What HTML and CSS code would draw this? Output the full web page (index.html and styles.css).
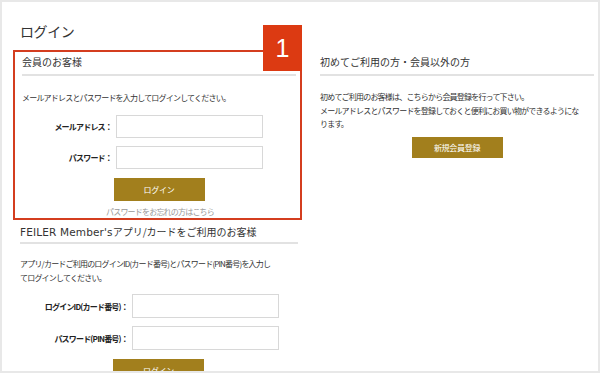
FILE: index.html
```html
<!DOCTYPE html>
<html lang="ja">
<head>
<meta charset="utf-8">
<title>ログイン</title>
<link rel="stylesheet" href="styles.css">
</head>
<body>
<div class="frame">
  <h1 class="title">ログイン</h1>
  <div class="columns">
    <div class="col-left">
      <section class="member-box">
        <span class="badge">1</span>
        <h2 class="sec-head">会員のお客様</h2>
        <p class="desc">メールアドレスとパスワードを入力してログインしてください。</p>
        <div class="form-row">
          <span class="label">メールアドレス：</span>
          <span class="input"></span>
        </div>
        <div class="form-row">
          <span class="label">パスワード：</span>
          <span class="input"></span>
        </div>
        <div class="btn-row"><span class="btn">ログイン</span></div>
        <div class="forgot">パスワードをお忘れの方はこちら</div>
      </section>
      <section class="app-box">
        <h2 class="sec-head app-head"><span class="latin">FEILER Member's</span>アプリ/カードをご利用のお客様</h2>
        <p class="desc app-desc">アプリ/カードご利用のログインID(カード番号)とパスワード(PIN番号)を入力し<br>てログインしてください。</p>
        <div class="form-row app-row">
          <span class="label">ログインID(カード番号)：</span>
          <span class="input"></span>
        </div>
        <div class="form-row app-row">
          <span class="label">パスワード(PIN番号)：</span>
          <span class="input"></span>
        </div>
        <div class="btn-row app-btn"><span class="btn">ログイン</span></div>
      </section>
    </div>
    <div class="col-right">
      <h2 class="sec-head">初めてご利用の方・会員以外の方</h2>
      <p class="desc right-desc">初めてご利用のお客様は、こちらから会員登録を行って下さい。<br>メールアドレスとパスワードを登録しておくと便利にお買い物ができるようになります。</p>
      <div class="btn-row right-btn"><span class="btn">新規会員登録</span></div>
    </div>
  </div>
</div>
</body>
</html>
```
FILE: styles.css
```css
* { box-sizing: border-box; }
html, body { margin: 0; padding: 0; background: #ffffff; }
body {
  font-family: "Noto Sans CJK JP", "Noto Sans", sans-serif;
  color: #333333;
}
.frame {
  width: 600px;
  height: 373px;
  border: 2px solid #e8e8e8;
  background: #ffffff;
  overflow: hidden;
}
.title {
  margin: 19px 0 0 18px;
  font-size: 14px;
  line-height: 20px;
  font-weight: normal;
  letter-spacing: -0.4px;
  color: #333;
}
.columns {
  display: flex;
  margin-top: 9px;
}
.col-left {
  width: 289px;
  margin-left: 11px;
}
.col-right {
  width: 274px;
  margin-left: 18px;
}
.member-box {
  position: relative;
  border: 2px solid #d43d1f;
  padding: 2px 4px 0 7px;
}
.badge {
  position: absolute;
  top: -27px;
  right: -2px;
  width: 39px;
  height: 46px;
  background: #dc3a12;
  color: #ffffff;
  font-family: "Liberation Sans", Arial, sans-serif;
  font-size: 25px;
  line-height: 46px;
  text-align: center;
}
.sec-head {
  margin: 0;
  font-size: 10px;
  line-height: 16px;
  font-weight: normal;
  padding-bottom: 4px;
  border-bottom: 2px solid #e2e2e2;
  color: #333;
}
.col-right .sec-head { margin-top: 4px; }
.desc {
  margin: 16px 0 0 0;
  font-size: 8px;
  line-height: 12px;
  letter-spacing: -0.8px;
  color: #333;
}
.form-row {
  display: grid;
  grid-template-columns: 90px 147px;
  column-gap: 4px;
  align-items: center;
  margin-top: 11px;
}
.form-row + .form-row { margin-top: 8px; }
.label {
  text-align: right;
  font-size: 8px;
  font-weight: bold;
  letter-spacing: -0.8px;
  color: #222;
}
.input {
  display: block;
  height: 23px;
  border: 1px solid #d8d8d8;
  background: #fff;
}
.btn-row {
  display: flex;
  justify-content: center;
  margin-top: 9px;
}
.btn {
  display: block;
  width: 91px;
  height: 23px;
  background: #a27f1d;
  color: #ffffff;
  font-size: 8px;
  line-height: 23px;
  text-align: center;
  letter-spacing: -0.3px;
}
.forgot {
  margin-top: 5px;
  text-align: center;
  font-size: 8px;
  line-height: 12px;
  letter-spacing: -0.8px;
  color: #999999;
  padding-left: 2px;
}
.app-box {
  padding: 0 4px 0 7px;
}
.app-head {
  margin-top: 4px;
  height: 20px;
  padding-bottom: 2px;
  overflow: hidden;
  white-space: nowrap;
}
.app-head .latin {
  font-family: "DejaVu Sans", sans-serif;
  font-size: 10.5px;
  line-height: 16px;
  letter-spacing: 0.15px;
}
.app-desc {
  margin-top: 13px;
  line-height: 14px;
}
.app-row {
  grid-template-columns: 108px 147px;
  margin-top: 9px;
}
.app-row .input { height: 24px; }
.app-row + .app-row { margin-top: 8px; }
.app-btn {
  margin-top: 9px;
  justify-content: flex-start;
  padding-left: 93px;
}
.right-desc {
  margin-top: 14px;
  line-height: 13.5px;
  padding-right: 12px;
}
.right-btn {
  margin-top: 6px;
}
.right-btn .btn { height: 21px; line-height: 21px; }
```
